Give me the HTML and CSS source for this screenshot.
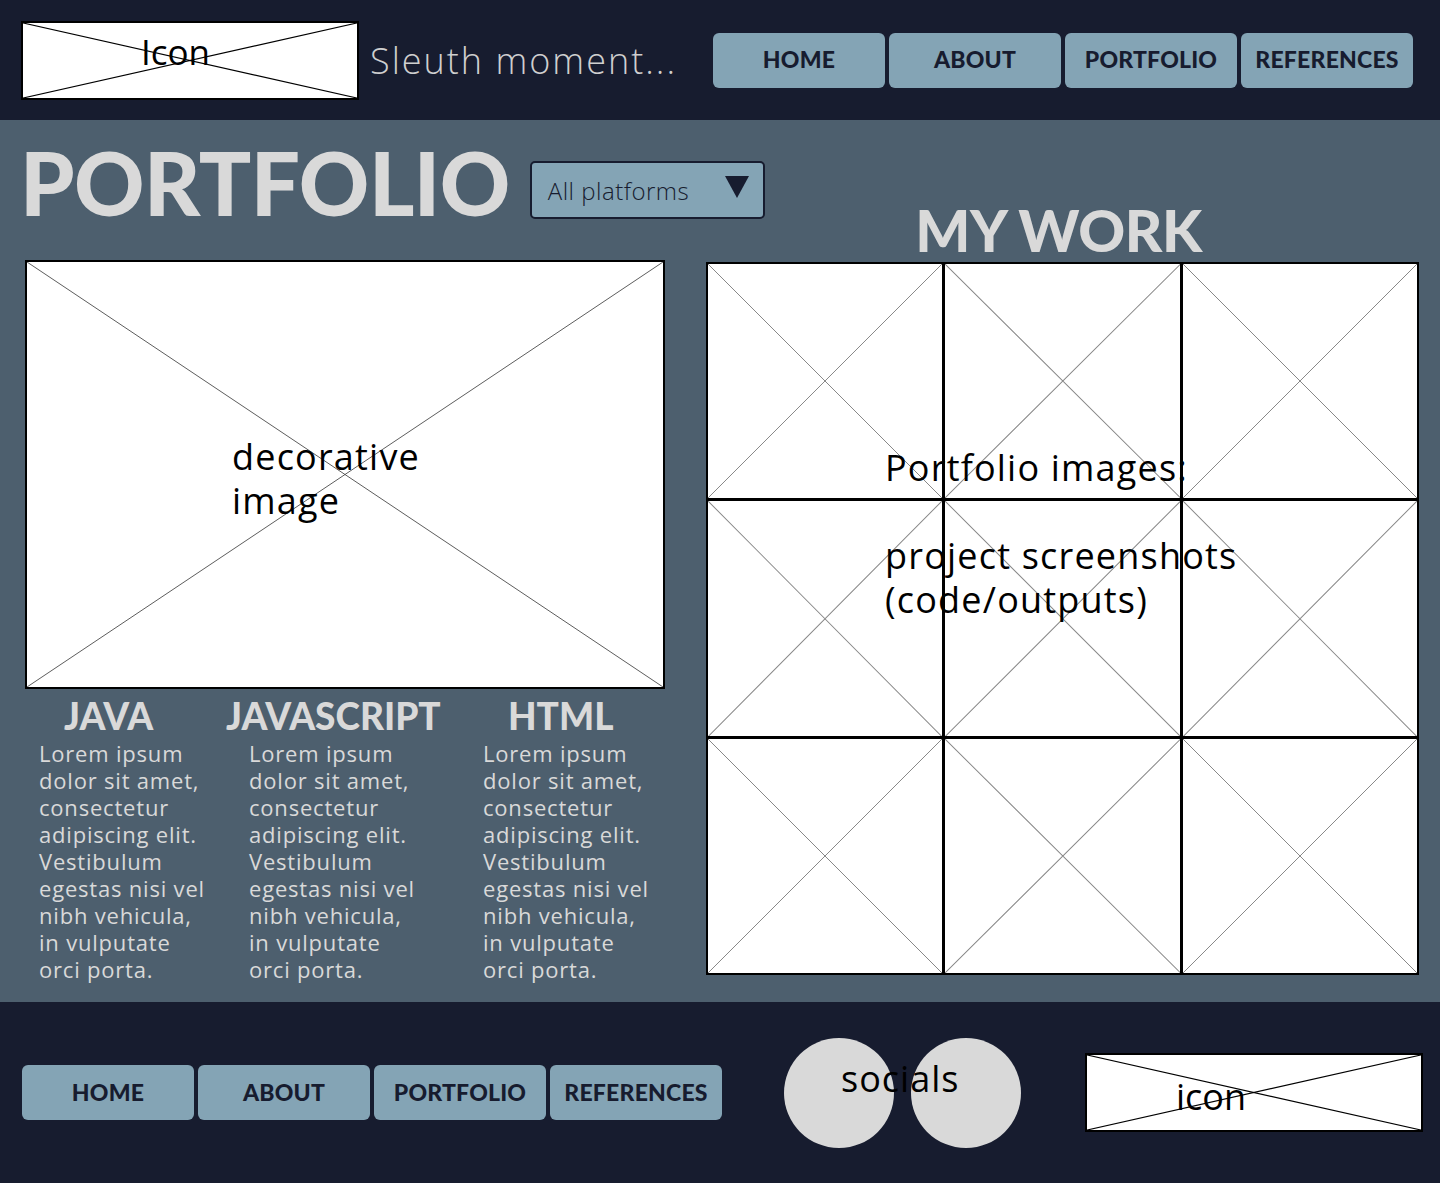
FILE: index.html
```html
<!DOCTYPE html>
<html lang="en">
<head>
  <meta charset="UTF-8">
  <title>Portfolio</title>
  <link rel="stylesheet" href="styles.css">
</head>
<body>
  <header class="top-bar">
    <div class="placeholder logo-box">Icon</div>
    <div class="tagline">Sleuth moment...</div>
    <nav class="nav">
      <a class="nav-btn" href="#">HOME</a>
      <a class="nav-btn" href="#">ABOUT</a>
      <a class="nav-btn" href="#">PORTFOLIO</a>
      <a class="nav-btn" href="#">REFERENCES</a>
    </nav>
  </header>

  <main class="content">
    <section class="left-col">
      <div class="title-row">
        <h1 class="page-title">PORTFOLIO</h1>
        <div class="dropdown">
          <span>All platforms</span>
          <span class="caret"></span>
        </div>
      </div>

      <div class="placeholder deco-image">
        <p>decorative<br>image</p>
      </div>

      <div class="langs">
        <div class="lang lang-java">
          <h3>JAVA</h3>
          <p>Lorem ipsum dolor sit amet, consectetur adipiscing elit. Vestibulum egestas nisi vel nibh vehicula, in vulputate orci porta.</p>
        </div>
        <div class="lang lang-js">
          <h3>JAVASCRIPT</h3>
          <p>Lorem ipsum dolor sit amet, consectetur adipiscing elit. Vestibulum egestas nisi vel nibh vehicula, in vulputate orci porta.</p>
        </div>
        <div class="lang lang-html">
          <h3>HTML</h3>
          <p>Lorem ipsum dolor sit amet, consectetur adipiscing elit. Vestibulum egestas nisi vel nibh vehicula, in vulputate orci porta.</p>
        </div>
      </div>
    </section>

    <section class="right-col">
      <h2 class="work-title">MY WORK</h2>
      <div class="work-grid">
        <div class="placeholder cell"></div>
        <div class="placeholder cell"></div>
        <div class="placeholder cell"></div>
        <div class="placeholder cell"></div>
        <div class="placeholder cell"></div>
        <div class="placeholder cell"></div>
        <div class="placeholder cell"></div>
        <div class="placeholder cell"></div>
        <div class="placeholder cell"></div>
        <p class="grid-note">Portfolio images:<br><br>project screenshots<br>(code/outputs)</p>
      </div>
    </section>
  </main>

  <footer class="bottom-bar">
    <nav class="nav">
      <a class="nav-btn" href="#">HOME</a>
      <a class="nav-btn" href="#">ABOUT</a>
      <a class="nav-btn" href="#">PORTFOLIO</a>
      <a class="nav-btn" href="#">REFERENCES</a>
    </nav>
    <div class="socials">
      <span class="circle"></span>
      <span class="circle"></span>
      <span class="socials-label">socials</span>
    </div>
    <div class="placeholder footer-icon">icon</div>
  </footer>
</body>
</html>
```

FILE: styles.css
```css
body {
  margin: 0;
  font-family: 'Open Sans', sans-serif;
  background: #4d5f6e;
}

/* wireframe box with an X through it */
.placeholder {
  box-sizing: border-box;
  background: #fff url("data:image/svg+xml,%3Csvg xmlns='http://www.w3.org/2000/svg' viewBox='0 0 100 100' preserveAspectRatio='none'%3E%3Cpath d='M0 0L100 100M100 0L0 100' fill='none' stroke='%23000' stroke-width='1.2' vector-effect='non-scaling-stroke'/%3E%3C/svg%3E") no-repeat;
  background-size: 100% 100%;
  color: #000;
}

.top-bar {
  height: 120px;
  background: #171c2f;
  display: flex;
  align-items: center;
  padding: 0 27px 0 21px;
}

.logo-box {
  width: 338px;
  height: 79px;
  border: 2px solid #000;
  font-size: 35px;
  line-height: 40px;
  padding: 9px 0 0 118px;
}

.tagline {
  margin-left: 11px;
  font-size: 36px;
  font-weight: 300;
  letter-spacing: 2px;
  color: #cfcfcf;
  white-space: nowrap;
}

.nav {
  display: flex;
  gap: 4px;
}

.top-bar .nav {
  margin-left: auto;
}

.nav-btn {
  width: 172px;
  height: 55px;
  display: flex;
  align-items: center;
  justify-content: center;
  padding-bottom: 2px;
  box-sizing: border-box;
  background: #84a4b5;
  border-radius: 6px;
  color: #171c2f;
  text-decoration: none;
  font-family: 'Lato', sans-serif;
  font-weight: 900;
  font-size: 23px;
  letter-spacing: 0.2px;
}

.content {
  display: flex;
  gap: 41px;
  padding: 0 21px 19px 25px;
}

.left-col {
  width: 640px;
}

.title-row {
  height: 140px;
  display: flex;
  align-items: center;
  margin-left: -5px;
}

.page-title {
  margin: -16px 0 0;
  font-family: 'Lato', sans-serif;
  font-weight: 900;
  font-size: 87px;
  letter-spacing: -0.5px;
  line-height: 1;
  color: #d9d9d9;
  white-space: nowrap;
}

.dropdown {
  flex-shrink: 0;
  margin-left: 20px;
  width: 235px;
  height: 58px;
  box-sizing: border-box;
  border: 2px solid #171c2f;
  border-radius: 5px;
  background: #84a4b5;
  display: flex;
  align-items: center;
  justify-content: space-between;
  padding: 0 14px 0 16px;
  font-size: 24px;
  font-weight: 300;
  letter-spacing: 0.5px;
  color: #171c2f;
  white-space: nowrap;
}

.caret {
  width: 0;
  height: 0;
  border-left: 12px solid transparent;
  border-right: 12px solid transparent;
  border-top: 22px solid #171c2f;
  margin-top: -6px;
}

.deco-image {
  background-image: url("data:image/svg+xml,%3Csvg xmlns='http://www.w3.org/2000/svg' viewBox='0 0 100 100' preserveAspectRatio='none'%3E%3Cpath d='M0 0L100 100M100 0L0 100' fill='none' stroke='%23333' stroke-width='0.8' vector-effect='non-scaling-stroke'/%3E%3C/svg%3E");
  height: 429px;
  border: 2px solid #000;
  display: flex;
  align-items: center;
  padding-left: 205px;
}

.deco-image p {
  margin: 0;
  font-size: 36px;
  line-height: 44px;
  letter-spacing: 1.2px;
  padding-top: 8px;
}

.langs {
  display: grid;
  grid-template-columns: 210px 234px 1fr;
  padding-left: 14px;
  color: #d9d9d9;
}

.lang h3 {
  margin: 6px 0 0;
  font-family: 'Lato', sans-serif;
  font-weight: 900;
  font-size: 37px;
  line-height: 42px;
}

.lang-java h3,
.lang-html h3 {
  margin-left: 25px;
}

.lang-js h3 {
  margin-left: -23px;
}

.lang p {
  margin: 3px 0 0;
  max-width: 174px;
  font-size: 22px;
  line-height: 27px;
  letter-spacing: 0.8px;
}

.right-col {
  width: 713px;
}

.work-title {
  margin: 0;
  height: 142px;
  display: flex;
  align-items: flex-end;
  justify-content: center;
  padding: 0 8px 3px 0;
  box-sizing: border-box;
  font-family: 'Lato', sans-serif;
  font-weight: 900;
  font-size: 58px;
  letter-spacing: -0.5px;
  line-height: 1;
  color: #d9d9d9;
}

.work-grid {
  position: relative;
  height: 713px;
  box-sizing: border-box;
  display: grid;
  grid-template-columns: repeat(3, 1fr);
  grid-template-rows: repeat(3, 1fr);
  gap: 3px;
  padding: 2px;
  background: #000;
}

.cell {
  background-image: url("data:image/svg+xml,%3Csvg xmlns='http://www.w3.org/2000/svg' viewBox='0 0 100 100' preserveAspectRatio='none'%3E%3Cpath d='M0 0L100 100M100 0L0 100' fill='none' stroke='%23888' stroke-width='1' vector-effect='non-scaling-stroke'/%3E%3C/svg%3E");
}

.grid-note {
  position: absolute;
  left: 179px;
  top: 184px;
  margin: 0;
  font-size: 36px;
  line-height: 44px;
  letter-spacing: 1.2px;
  color: #000;
}

.bottom-bar {
  height: 181px;
  background: #171c2f;
  display: flex;
  align-items: center;
  padding-left: 22px;
}

.socials {
  position: relative;
  margin-left: 62px;
  display: flex;
  gap: 17px;
}

.circle {
  width: 110px;
  height: 110px;
  border-radius: 50%;
  background: #d9d9d9;
}

.socials-label {
  position: absolute;
  left: 57px;
  top: 19px;
  font-size: 36px;
  line-height: 44px;
  letter-spacing: 1px;
  color: #000;
}

.footer-icon {
  margin-left: 64px;
  width: 338px;
  height: 79px;
  border: 2px solid #000;
  font-size: 36px;
  line-height: 40px;
  padding: 22px 0 0 89px;
}
```
